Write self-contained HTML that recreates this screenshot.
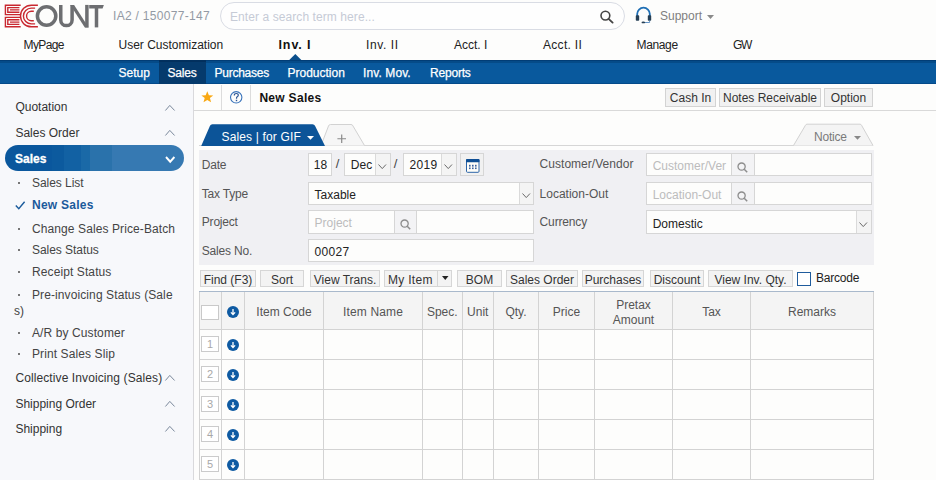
<!DOCTYPE html>
<html><head><meta charset="utf-8">
<style>
*{margin:0;padding:0;box-sizing:border-box}
html,body{width:936px;height:480px;overflow:hidden;background:#fdfdfc;font-family:"Liberation Sans",sans-serif;font-size:12px;color:#333}
.a{position:absolute}
.t{position:absolute;font-size:12px;line-height:14px;white-space:nowrap}
svg{position:absolute;overflow:visible}
.btn{position:absolute;background:#f1f1f1;border:1px solid #d3d3d3}
.fld{position:absolute;background:#fdfdfc;border:1px solid #d6d6d6}
.sb{position:absolute;background:#f3f3f5;border:1px solid #d6d6d6}
.vl{position:absolute;width:1px;background:#d4d4d4}
.hl{position:absolute;height:1px;background:#d4d4d4}
</style></head><body>

<!-- ===== HEADER ===== -->
<svg width="110" height="32" style="left:0;top:0">
  <g fill="none" stroke="#c92830" stroke-width="1.4">
    <path d="M20.7 5.2 H5.4 V14.6 H20.7 M19.4 7.6 H7.8 V12.2 H19.4 M19.4 9.9 H10 M20.7 17.4 H5.4 V26.8 H20.7 M19.4 19.8 H7.8 V24.4 H19.4 M19.4 22.1 H10"/>
    <path d="M37.9 5.2 H31.3 A10.8 10.8 0 0 0 31.3 26.8 H37.9"/>
    <path d="M35.1 8.1 H31.3 A7.9 7.9 0 0 0 31.3 23.9 H35.1"/>
    <path d="M33.8 11.25 H31.3 A4.75 4.75 0 0 0 31.3 20.75 H33.8"/>
  </g>
  <g fill="none" stroke="#6d6e71" stroke-width="3.5">
    <circle cx="46.6" cy="16" r="9.2"/>
    <path d="M60.75 4.9 V19.9 A5.67 5.67 0 0 0 72.1 19.9 V4.9"/>
    <path d="M86.9 4.9 V27.4"/>
    <path d="M96.5 6 V27.4"/>
  </g>
  <g fill="#6d6e71">
    <path d="M70.3 4.9 H74.1 L88.6 27.4 H84.8 Z"/>
    <path d="M89.2 4.9 H103.9 L102.6 8.5 H89.2 Z"/>
  </g>
</svg>
<div class="t" style="left:113px;top:9px;color:#939aa4;letter-spacing:0.3px">IA2 / 150077-147</div>
<div class="a" style="left:220px;top:2px;width:405px;height:28px;border:1px solid #d9dce4;border-radius:14px;background:#fefefe"></div>
<div class="t" style="left:230px;top:10px;color:#c6cbd6;letter-spacing:0.08px">Enter a search term here...</div>
<svg width="16" height="16" style="left:599px;top:9px">
  <circle cx="6.4" cy="6.6" r="4.4" fill="none" stroke="#454545" stroke-width="1.6"/>
  <path d="M9.6 9.9 L13.6 13.6" stroke="#454545" stroke-width="1.9" stroke-linecap="round"/>
</svg>
<svg width="18" height="18" style="left:635px;top:6px">
  <path d="M2.2 11 V8 A6.3 6.3 0 0 1 14.8 8 V11" fill="none" stroke="#1f6fb5" stroke-width="1.8"/>
  <rect x="0.8" y="9.2" width="3.4" height="5.6" rx="0.8" fill="#263f55"/>
  <rect x="12.8" y="9.2" width="3.4" height="5.6" rx="0.8" fill="#263f55"/>
  <path d="M14.6 14.6 V16.5 H9" fill="none" stroke="#3c78b8" stroke-width="0.8"/>
  <ellipse cx="8.3" cy="16.4" rx="1.8" ry="0.9" fill="#263f55"/>
</svg>
<div class="t" style="left:660px;top:9px;color:#7f7f7f">Support</div>
<svg width="8" height="5" style="left:707px;top:15px"><path d="M0 0 H7 L3.5 4 Z" fill="#8a8a8a"/></svg>

<!-- menu row -->
<div class="t" style="left:23.5px;top:38px;color:#222;letter-spacing:-0.6px">MyPage</div>
<div class="t" style="left:118.5px;top:38px;color:#222">User Customization</div>
<div class="t" style="left:278.5px;top:38px;color:#111;font-weight:bold;letter-spacing:0.9px;font-size:12.5px">Inv. I</div>
<div class="t" style="left:366px;top:38px;color:#222;letter-spacing:0.6px">Inv. II</div>
<div class="t" style="left:454px;top:38px;color:#222">Acct. I</div>
<div class="t" style="left:543px;top:38px;color:#222;letter-spacing:0.3px">Acct. II</div>
<div class="t" style="left:636.5px;top:38px;color:#222;letter-spacing:-0.35px">Manage</div>
<div class="t" style="left:733px;top:38px;color:#222;letter-spacing:-1.4px">GW</div>
<svg width="14" height="7" style="left:288.5px;top:54px"><path d="M0 6.2 L6.3 0 L12.6 6.2 Z" fill="#0b4f8c"/></svg>

<!-- blue subnav -->
<div class="a" style="left:0;top:60px;width:936px;height:24px;background:linear-gradient(#013d76 0px,#013d76 1px,#054b88 1px,#054b88 3px,#09599d 3px,#09599d 23px,#044a8a 23px)"></div>
<div class="a" style="left:159px;top:60px;width:47px;height:24px;background:linear-gradient(#02305e 0px,#02305e 2px,#053a6c 2px)"></div>
<div class="t" style="left:118.5px;top:66px;color:#fff;-webkit-text-stroke:0.25px #fff">Setup</div>
<div class="t" style="left:167.5px;top:66px;color:#fff;-webkit-text-stroke:0.25px #fff;letter-spacing:-0.2px">Sales</div>
<div class="t" style="left:214.5px;top:66px;color:#fff;-webkit-text-stroke:0.25px #fff;letter-spacing:-0.25px">Purchases</div>
<div class="t" style="left:287.5px;top:66px;color:#fff;-webkit-text-stroke:0.25px #fff">Production</div>
<div class="t" style="left:363px;top:66px;color:#fff;-webkit-text-stroke:0.25px #fff;letter-spacing:0.1px">Inv. Mov.</div>
<div class="t" style="left:430px;top:66px;color:#fff;-webkit-text-stroke:0.25px #fff;letter-spacing:-0.2px">Reports</div>

<!-- ===== SIDEBAR ===== -->
<div class="a" style="left:0;top:84px;width:193px;height:396px;background:#f7f8fb"></div>
<div class="vl" style="left:193px;top:84px;height:396px;background:#d9d9dc"></div>
<div class="t" style="left:15.4px;top:99.9px;color:#333">Quotation</div>
<svg width="12" height="8" style="left:165px;top:104.6px"><path d="M0.4 5.5 L4.8 0.4 L9.6 5.5" fill="none" stroke="#7a889b" stroke-width="1"/></svg>
<div class="t" style="left:15.4px;top:126.4px;color:#333">Sales Order</div>
<svg width="12" height="8" style="left:165px;top:130.3px"><path d="M0.4 5.5 L4.8 0.4 L9.6 5.5" fill="none" stroke="#7a889b" stroke-width="1"/></svg>
<div class="a" style="left:5px;top:145px;width:179px;height:26px;border-radius:13px;background:linear-gradient(90deg,#0a579d 47px,#0c5a9e 47px,#0c5a9e 59px,#1261a3 59px,#1261a3 76px,#1a69a7 76px,#1a69a7 85px,#2a72ab 85px,#2a72ab 107px,#3679b2 107px)"></div>
<div class="t" style="left:15px;top:151.8px;color:#fff;font-weight:bold;-webkit-text-stroke:0.3px #fff">Sales</div>
<svg width="12" height="8" style="left:164.6px;top:155.6px"><path d="M1 1 L5.2 5.7 L9.4 1" fill="none" stroke="#fff" stroke-width="1.9"/></svg>
<div class="a" style="left:18.2px;top:182.1px;width:1.8px;height:1.8px;background:#777"></div>
<div class="t" style="left:32px;top:175.9px;color:#444;letter-spacing:-0.05px">Sales List</div>
<svg width="12" height="10" style="left:15px;top:201.4px"><path d="M0.8 4.5 L3.8 7.8 L9.6 0.8" fill="none" stroke="#1a5b9c" stroke-width="1.4"/></svg>
<div class="t" style="left:32px;top:198.4px;color:#1b5a9b;font-weight:bold;letter-spacing:0.25px">New Sales</div>
<div class="a" style="left:18.2px;top:227.79999999999998px;width:1.8px;height:1.8px;background:#777"></div>
<div class="t" style="left:32px;top:221.6px;color:#444;letter-spacing:0.1px">Change Sales Price-Batch</div>
<div class="a" style="left:18.2px;top:249.1px;width:1.8px;height:1.8px;background:#777"></div>
<div class="t" style="left:32px;top:242.9px;color:#444;letter-spacing:-0.05px">Sales Status</div>
<div class="a" style="left:18.2px;top:271.09999999999997px;width:1.8px;height:1.8px;background:#777"></div>
<div class="t" style="left:32px;top:264.9px;color:#444;letter-spacing:0.1px">Receipt Status</div>
<div class="a" style="left:18.2px;top:294.4px;width:1.8px;height:1.8px;background:#777"></div>
<div class="t" style="left:32px;top:288.2px;color:#444;letter-spacing:0.1px">Pre-invoicing Status (Sale</div>
<div class="a" style="left:18.2px;top:331.9px;width:1.8px;height:1.8px;background:#777"></div>
<div class="t" style="left:32px;top:325.7px;color:#444;letter-spacing:0.1px">A/R by Customer</div>
<div class="a" style="left:18.2px;top:353.2px;width:1.8px;height:1.8px;background:#777"></div>
<div class="t" style="left:32px;top:347px;color:#444;letter-spacing:0.1px">Print Sales Slip</div>
<div class="t" style="left:14px;top:303.9px;color:#444">s)</div>
<div class="t" style="left:15.4px;top:371px;color:#333;letter-spacing:0.1px">Collective Invoicing (Sales)</div>
<svg width="12" height="8" style="left:165px;top:375px"><path d="M0.4 5.5 L4.8 0.4 L9.6 5.5" fill="none" stroke="#7a889b" stroke-width="1"/></svg>
<div class="t" style="left:15.4px;top:397px;color:#333">Shipping Order</div>
<svg width="12" height="8" style="left:165px;top:401px"><path d="M0.4 5.5 L4.8 0.4 L9.6 5.5" fill="none" stroke="#7a889b" stroke-width="1"/></svg>
<div class="t" style="left:15.4px;top:422.1px;color:#333">Shipping</div>
<svg width="12" height="8" style="left:165px;top:426.2px"><path d="M0.4 5.5 L4.8 0.4 L9.6 5.5" fill="none" stroke="#7a889b" stroke-width="1"/></svg>
<div class="vl" style="left:221px;top:85px;height:25px;background:#dcdcdc"></div>
<div class="vl" style="left:250px;top:85px;height:25px;background:#dcdcdc"></div>
<div class="hl" style="left:194px;top:110px;width:742px;background:#d9d9d9"></div>
<svg width="14" height="12" style="left:200.9px;top:90.9px"><path d="M6.3 0.3 L7.9 4.2 L12.2 4.4 L8.9 7.1 L10.1 11.2 L6.3 8.9 L2.5 11.2 L3.7 7.1 L0.4 4.4 L4.7 4.2 Z" fill="#f9a812"/></svg>
<svg width="14" height="14" style="left:230.2px;top:91.3px"><circle cx="6.2" cy="6.3" r="5.7" fill="none" stroke="#3a74bb" stroke-width="1.1"/><path d="M4.3 4.5 Q4.3 2.5 6.3 2.5 Q8.3 2.5 8.3 4.3 Q8.3 5.4 6.7 6.2 L6.5 7.8" fill="none" stroke="#2d5796" stroke-width="1.2"/><rect x="5.8" y="8.8" width="1.4" height="1.4" fill="#2d5796"/></svg>
<div class="t" style="left:259.4px;top:90.9px;color:#111;font-weight:bold;letter-spacing:0.3px">New Sales</div>
<div class="btn" style="left:665px;top:88px;width:51px;height:19px"></div>
<div class="t" style="left:665px;top:91px;width:51px;text-align:center;color:#333">Cash In</div>
<div class="btn" style="left:719px;top:88px;width:102px;height:19px"></div>
<div class="t" style="left:719px;top:91px;width:102px;text-align:center;color:#333">Notes Receivable</div>
<div class="btn" style="left:824px;top:88px;width:49px;height:19px"></div>
<div class="t" style="left:824px;top:91px;width:49px;text-align:center;color:#333">Option</div>
<div class="hl" style="left:199px;top:145px;width:674px;background:#d6d6d6"></div>
<svg width="50" height="24" style="left:318px;top:123px"><path d="M3 22.5 L10.5 3 Q11 1.5 12.5 1.5 L33 1.5 Q34.5 1.5 35 3 L46.5 22.5" fill="#f6f6f6" stroke="#d2d2d2" stroke-width="1"/></svg>
<svg width="130" height="24" style="left:199px;top:123px"><path d="M2.2 23 L11 2.8 Q11.6 1.2 13.4 1.2 L113.5 1.2 Q115.3 1.2 116 2.8 L126 23 Z" fill="#0c5498"/></svg>
<div class="t" style="left:221.5px;top:130.4px;color:#fff;letter-spacing:0.15px">Sales | for GIF</div>
<svg width="8" height="5" style="left:306.5px;top:136px"><path d="M0 0 H7 L3.5 3.8 Z" fill="#fff"/></svg>
<svg width="12" height="12" style="left:336.5px;top:133.5px"><path d="M4.7 0.5 V9 M0.4 4.75 H9" stroke="#8a8a8a" stroke-width="1.2"/></svg>
<svg width="84" height="24" style="left:792px;top:123px"><path d="M1.5 22.5 L13.5 2.2 Q14 1.2 15 1.2 L68 1.2 Q69 1.2 69.5 2.2 L81 22.5" fill="#f4f4f4" stroke="#d2d2d2" stroke-width="1"/></svg>
<div class="t" style="left:814px;top:129.6px;color:#7a7a7a;letter-spacing:-0.2px">Notice</div>
<svg width="8" height="5" style="left:853.5px;top:136px"><path d="M0 0 H7 L3.5 3.8 Z" fill="#888"/></svg>
<div class="a" style="left:199px;top:150px;width:675px;height:115px;background:#f0f0f3"></div>
<div class="t" style="left:201.8px;top:157.75px;color:#555;letter-spacing:-0.2px">Date</div>
<div class="t" style="left:201.8px;top:186.75px;color:#555;letter-spacing:-0.2px">Tax Type</div>
<div class="t" style="left:201.8px;top:215.25px;color:#555;letter-spacing:-0.2px">Project</div>
<div class="t" style="left:201.8px;top:243.75px;color:#555;letter-spacing:-0.2px">Sales No.</div>
<div class="t" style="left:539.6px;top:157.4px;color:#555;letter-spacing:0.03px">Customer/Vendor</div>
<div class="t" style="left:539.6px;top:186.6px;color:#555;letter-spacing:0px">Location-Out</div>
<div class="t" style="left:539.6px;top:214.9px;color:#555;letter-spacing:-0.15px">Currency</div>
<div class="fld" style="left:308px;top:153px;width:24px;height:23px"></div>
<div class="t" style="left:313.8px;top:157.9px;color:#222">18</div>
<div class="t" style="left:335.8px;top:157.2px;color:#444;font-size:13px">/</div>
<div class="fld" style="left:344px;top:153px;width:47px;height:23px"></div>
<div class="a" style="left:375px;top:154px;width:15px;height:21px;background:#f4f4f4;border-left:1px solid #dadada"></div>
<div class="t" style="left:350.8px;top:158.2px;color:#222">Dec</div>
<svg width="12" height="8" style="left:378.3px;top:164.2px"><path d="M0.5 0.5 L4.25 4.6 L8 0.5" fill="none" stroke="#6a6a6a" stroke-width="1"/></svg>
<div class="t" style="left:393.8px;top:157.2px;color:#444;font-size:13px">/</div>
<div class="fld" style="left:403px;top:153px;width:54px;height:23px"></div>
<div class="a" style="left:441px;top:154px;width:15px;height:21px;background:#f4f4f4;border-left:1px solid #dadada"></div>
<div class="t" style="left:409.6px;top:158.2px;color:#222;letter-spacing:0.3px">2019</div>
<svg width="12" height="8" style="left:443.8px;top:164.2px"><path d="M0.5 0.5 L4.25 4.6 L8 0.5" fill="none" stroke="#6a6a6a" stroke-width="1"/></svg>
<div class="a" style="left:460px;top:153px;width:24px;height:23px;background:#f1f1f1;border:1px solid #d6d6d6"></div>
<svg width="14" height="14" style="left:466px;top:158.5px"><rect x="0.5" y="0.5" width="12.5" height="12.8" rx="1" fill="#fffef8" stroke="#2c64a8" stroke-width="1"/><rect x="0" y="0" width="13.5" height="3.3" rx="0.8" fill="#0f4f94"/><g fill="#3a62a0"><rect x="3" y="5.8" width="1.6" height="1.8"/><rect x="6" y="5.8" width="1.6" height="1.8"/><rect x="9" y="5.8" width="1.6" height="1.8"/><rect x="3" y="8.5" width="1.6" height="1.6"/><rect x="6" y="8.5" width="1.6" height="1.6"/><rect x="9" y="8.5" width="1.6" height="1.6"/></g></svg>
<div class="fld" style="left:308px;top:182px;width:226px;height:23px"></div>
<div class="a" style="left:519px;top:183px;width:14px;height:21px;background:#f4f4f4;border-left:1px solid #dadada"></div>
<div class="t" style="left:314.6px;top:187.75px;color:#222">Taxable</div>
<svg width="12" height="8" style="left:521.6px;top:193px"><path d="M0.5 0.5 L4.25 4.6 L8 0.5" fill="none" stroke="#6a6a6a" stroke-width="1"/></svg>
<div class="fld" style="left:308px;top:210px;width:226px;height:24px"></div>
<div class="sb" style="left:394px;top:210px;width:23px;height:24px"></div>
<div class="t" style="left:314.6px;top:216px;color:#bcbcbc">Project</div>
<svg width="12" height="12" style="left:399.5px;top:219px"><circle cx="4.6" cy="4.6" r="3.6" fill="none" stroke="#8d8d8d" stroke-width="1.3"/><path d="M7.2 7.2 L10.2 10.2" stroke="#8d8d8d" stroke-width="1.5"/></svg>
<div class="fld" style="left:308px;top:239px;width:226px;height:23px"></div>
<div class="t" style="left:314.6px;top:244.5px;color:#222;letter-spacing:0.3px">00027</div>
<div class="fld" style="left:646px;top:153px;width:226px;height:23px"></div>
<div class="sb" style="left:731px;top:153px;width:24px;height:23px"></div>
<div class="t" style="left:652.7px;top:158.5px;color:#bcbcbc;width:74px;overflow:hidden">Customer/Ver</div>
<svg width="12" height="12" style="left:736.5px;top:161.5px"><circle cx="4.6" cy="4.6" r="3.6" fill="none" stroke="#8d8d8d" stroke-width="1.3"/><path d="M7.2 7.2 L10.2 10.2" stroke="#8d8d8d" stroke-width="1.5"/></svg>
<div class="fld" style="left:646px;top:182px;width:226px;height:23px"></div>
<div class="sb" style="left:731px;top:182px;width:24px;height:23px"></div>
<div class="t" style="left:652.7px;top:187.5px;color:#bcbcbc">Location-Out</div>
<svg width="12" height="12" style="left:736.5px;top:190.5px"><circle cx="4.6" cy="4.6" r="3.6" fill="none" stroke="#8d8d8d" stroke-width="1.3"/><path d="M7.2 7.2 L10.2 10.2" stroke="#8d8d8d" stroke-width="1.5"/></svg>
<div class="fld" style="left:646px;top:210px;width:226px;height:24px"></div>
<div class="a" style="left:856px;top:211px;width:15px;height:22px;background:#f4f4f4;border-left:1px solid #dadada"></div>
<div class="t" style="left:652.7px;top:217.3px;color:#222">Domestic</div>
<svg width="12" height="8" style="left:858.8px;top:221.5px"><path d="M0.5 0.5 L4.25 4.6 L8 0.5" fill="none" stroke="#6a6a6a" stroke-width="1"/></svg>
<div class="btn" style="left:200px;top:270px;width:56px;height:17px;background:#f3f3f3;border-color:#d6d6d6"></div>
<div class="t" style="left:200px;top:272.9px;width:56px;text-align:center;color:#333;letter-spacing:0px">Find (F3)</div>
<div class="btn" style="left:260px;top:270px;width:44px;height:17px;background:#f3f3f3;border-color:#d6d6d6"></div>
<div class="t" style="left:260px;top:272.9px;width:44px;text-align:center;color:#333;letter-spacing:0px">Sort</div>
<div class="btn" style="left:310px;top:270px;width:70px;height:17px;background:#f3f3f3;border-color:#d6d6d6"></div>
<div class="t" style="left:310px;top:272.9px;width:70px;text-align:center;color:#333;letter-spacing:0px">View Trans.</div>
<div class="btn" style="left:384px;top:270px;width:68px;height:17px;background:#f3f3f3;border-color:#d6d6d6"></div>
<div class="vl" style="left:437px;top:271px;height:15px;background:#d6d6d6"></div>
<div class="t" style="left:388px;top:272.9px;color:#333;letter-spacing:0.3px">My Item</div>
<svg width="8" height="5" style="left:442px;top:276px"><path d="M0 0 H6.5 L3.25 4 Z" fill="#222"/></svg>
<div class="btn" style="left:457px;top:270px;width:45px;height:17px;background:#f3f3f3;border-color:#d6d6d6"></div>
<div class="t" style="left:457px;top:272.9px;width:45px;text-align:center;color:#333;letter-spacing:0px">BOM</div>
<div class="btn" style="left:506px;top:270px;width:72px;height:17px;background:#f3f3f3;border-color:#d6d6d6"></div>
<div class="t" style="left:506px;top:272.9px;width:72px;text-align:center;color:#333;letter-spacing:0px">Sales Order</div>
<div class="btn" style="left:582px;top:270px;width:62px;height:17px;background:#f3f3f3;border-color:#d6d6d6"></div>
<div class="t" style="left:582px;top:272.9px;width:62px;text-align:center;color:#333;letter-spacing:0px">Purchases</div>
<div class="btn" style="left:650px;top:270px;width:54px;height:17px;background:#f3f3f3;border-color:#d6d6d6"></div>
<div class="t" style="left:650px;top:272.9px;width:54px;text-align:center;color:#333;letter-spacing:0px">Discount</div>
<div class="btn" style="left:708px;top:270px;width:85px;height:17px;background:#f3f3f3;border-color:#d6d6d6"></div>
<div class="t" style="left:708px;top:272.9px;width:85px;text-align:center;color:#333;letter-spacing:0px">View Inv. Qty.</div>
<div class="a" style="left:797px;top:272px;width:14px;height:14px;border:1.5px solid #1f5c9d;background:#fff"></div>
<div class="t" style="left:816px;top:270.9px;color:#222;letter-spacing:-0.2px">Barcode</div>
<div class="a" style="left:199px;top:291px;width:675px;height:39px;background:#f4f4f4"></div>
<div class="a" style="left:199px;top:291px;width:675px;height:1px;background:#a9b9cc"></div>
<div class="vl" style="left:199px;top:292px;height:188px;background:#d3d3d3"></div>
<div class="vl" style="left:221px;top:292px;height:188px;background:#d3d3d3"></div>
<div class="vl" style="left:244px;top:292px;height:188px;background:#d3d3d3"></div>
<div class="vl" style="left:323px;top:292px;height:188px;background:#d3d3d3"></div>
<div class="vl" style="left:422px;top:292px;height:188px;background:#d3d3d3"></div>
<div class="vl" style="left:462px;top:292px;height:188px;background:#d3d3d3"></div>
<div class="vl" style="left:493px;top:292px;height:188px;background:#d3d3d3"></div>
<div class="vl" style="left:538px;top:292px;height:188px;background:#d3d3d3"></div>
<div class="vl" style="left:594px;top:292px;height:188px;background:#d3d3d3"></div>
<div class="vl" style="left:672px;top:292px;height:188px;background:#d3d3d3"></div>
<div class="vl" style="left:750px;top:292px;height:188px;background:#d3d3d3"></div>
<div class="vl" style="left:873px;top:292px;height:188px;background:#d3d3d3"></div>
<div class="hl" style="left:199px;top:329px;width:675px;background:#d3d3d3"></div>
<div class="hl" style="left:199px;top:359px;width:675px;background:#d3d3d3"></div>
<div class="hl" style="left:199px;top:389px;width:675px;background:#d3d3d3"></div>
<div class="hl" style="left:199px;top:419px;width:675px;background:#d3d3d3"></div>
<div class="hl" style="left:199px;top:449px;width:675px;background:#d3d3d3"></div>
<div class="hl" style="left:199px;top:479px;width:675px;background:#d3d3d3"></div>
<div class="a" style="left:201px;top:305px;width:18px;height:15px;background:#fff;border:1px solid #c9c9c9"></div>
<svg width="14" height="14" style="left:227px;top:305.8px"><circle cx="6" cy="6" r="6" fill="#0e5aa2"/><path d="M6 3 V8.3 M3.9 6.4 L6 8.5 L8.1 6.4" fill="none" stroke="#fff" stroke-width="1.3"/></svg>
<div class="t" style="left:244.5px;top:304.9px;width:79.0px;text-align:center;color:#555;letter-spacing:0px">Item Code</div>
<div class="t" style="left:323.5px;top:304.9px;width:99.0px;text-align:center;color:#555;letter-spacing:0.15px">Item Name</div>
<div class="t" style="left:422.5px;top:304.9px;width:39.5px;text-align:center;color:#555;letter-spacing:0px">Spec.</div>
<div class="t" style="left:462px;top:304.9px;width:31.5px;text-align:center;color:#555;letter-spacing:0px">Unit</div>
<div class="t" style="left:493.5px;top:304.9px;width:45.0px;text-align:center;color:#555;letter-spacing:0px">Qty.</div>
<div class="t" style="left:538.5px;top:304.9px;width:56.0px;text-align:center;color:#555;letter-spacing:0px">Price</div>
<div class="t" style="left:672.5px;top:304.9px;width:78.0px;text-align:center;color:#555;letter-spacing:0px">Tax</div>
<div class="t" style="left:750.5px;top:304.9px;width:123.0px;text-align:center;color:#555;letter-spacing:0px">Remarks</div>
<div class="t" style="left:594.5px;top:298.2px;width:78.0px;text-align:center;color:#555;line-height:14.8px">Pretax<br>Amount</div>
<div class="a" style="left:201px;top:336px;width:18px;height:16px;background:#fff;border:1px solid #cbcbcb"></div>
<div class="t" style="left:201px;top:337px;width:18px;text-align:center;color:#a8a8a8;font-size:11px">1</div>
<svg width="14" height="14" style="left:227px;top:338.8px"><circle cx="6" cy="6" r="6" fill="#0e5aa2"/><path d="M6 3 V8.3 M3.9 6.4 L6 8.5 L8.1 6.4" fill="none" stroke="#fff" stroke-width="1.3"/></svg>
<div class="a" style="left:201px;top:366px;width:18px;height:16px;background:#fff;border:1px solid #cbcbcb"></div>
<div class="t" style="left:201px;top:367px;width:18px;text-align:center;color:#a8a8a8;font-size:11px">2</div>
<svg width="14" height="14" style="left:227px;top:368.8px"><circle cx="6" cy="6" r="6" fill="#0e5aa2"/><path d="M6 3 V8.3 M3.9 6.4 L6 8.5 L8.1 6.4" fill="none" stroke="#fff" stroke-width="1.3"/></svg>
<div class="a" style="left:201px;top:396px;width:18px;height:16px;background:#fff;border:1px solid #cbcbcb"></div>
<div class="t" style="left:201px;top:397px;width:18px;text-align:center;color:#a8a8a8;font-size:11px">3</div>
<svg width="14" height="14" style="left:227px;top:398.8px"><circle cx="6" cy="6" r="6" fill="#0e5aa2"/><path d="M6 3 V8.3 M3.9 6.4 L6 8.5 L8.1 6.4" fill="none" stroke="#fff" stroke-width="1.3"/></svg>
<div class="a" style="left:201px;top:426px;width:18px;height:16px;background:#fff;border:1px solid #cbcbcb"></div>
<div class="t" style="left:201px;top:427px;width:18px;text-align:center;color:#a8a8a8;font-size:11px">4</div>
<svg width="14" height="14" style="left:227px;top:428.8px"><circle cx="6" cy="6" r="6" fill="#0e5aa2"/><path d="M6 3 V8.3 M3.9 6.4 L6 8.5 L8.1 6.4" fill="none" stroke="#fff" stroke-width="1.3"/></svg>
<div class="a" style="left:201px;top:456px;width:18px;height:16px;background:#fff;border:1px solid #cbcbcb"></div>
<div class="t" style="left:201px;top:457px;width:18px;text-align:center;color:#a8a8a8;font-size:11px">5</div>
<svg width="14" height="14" style="left:227px;top:458.8px"><circle cx="6" cy="6" r="6" fill="#0e5aa2"/><path d="M6 3 V8.3 M3.9 6.4 L6 8.5 L8.1 6.4" fill="none" stroke="#fff" stroke-width="1.3"/></svg>
</body></html>
